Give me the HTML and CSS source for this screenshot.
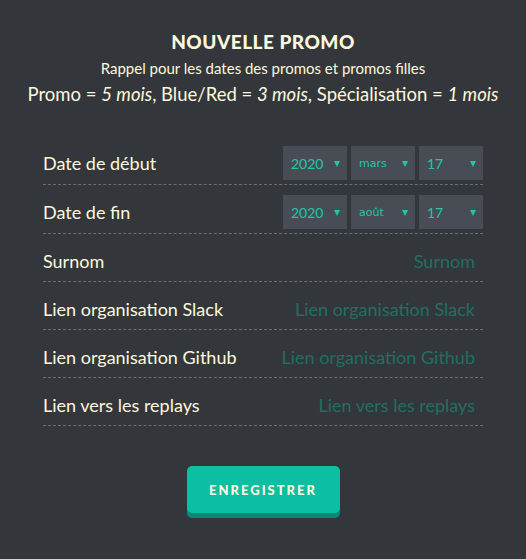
FILE: index.html
```html
<!DOCTYPE html>
<html lang="fr">
<head>
<meta charset="utf-8">
<title>Nouvelle promo</title>
<link rel="stylesheet" href="styles.css">
</head>
<body>
<main class="page">
  <header class="head">
    <h1 class="title">NOUVELLE PROMO</h1>
    <p class="sub">Rappel pour les dates des promos et promos filles</p>
    <p class="durations">Promo = <em>5 mois</em>, Blue/Red = <em>3 mois</em>, Spécialisation = <em>1 mois</em></p>
  </header>
  <form class="form">
    <div class="row row-date">
      <span class="label">Date de début</span>
      <div class="selects">
        <div class="sel"><select class="num"><option>2020</option></select><svg class="arrow" viewBox="0 0 6 6"><path d="M0 0H6L3 6Z"/></svg></div>
        <div class="sel"><select class="month"><option>mars</option></select><svg class="arrow" viewBox="0 0 6 6"><path d="M0 0H6L3 6Z"/></svg></div>
        <div class="sel"><select class="num"><option>17</option></select><svg class="arrow" viewBox="0 0 6 6"><path d="M0 0H6L3 6Z"/></svg></div>
      </div>
    </div>
    <div class="row row-date">
      <span class="label">Date de fin</span>
      <div class="selects">
        <div class="sel"><select class="num"><option>2020</option></select><svg class="arrow" viewBox="0 0 6 6"><path d="M0 0H6L3 6Z"/></svg></div>
        <div class="sel"><select class="month"><option>août</option></select><svg class="arrow" viewBox="0 0 6 6"><path d="M0 0H6L3 6Z"/></svg></div>
        <div class="sel"><select class="num"><option>17</option></select><svg class="arrow" viewBox="0 0 6 6"><path d="M0 0H6L3 6Z"/></svg></div>
      </div>
    </div>
    <div class="row">
      <label class="label" for="f-surnom">Surnom</label>
      <input class="field" id="f-surnom" type="text" placeholder="Surnom">
    </div>
    <div class="row">
      <label class="label" for="f-slack">Lien organisation Slack</label>
      <input class="field" id="f-slack" type="text" placeholder="Lien organisation Slack">
    </div>
    <div class="row">
      <label class="label" for="f-github">Lien organisation Github</label>
      <input class="field" id="f-github" type="text" placeholder="Lien organisation Github">
    </div>
    <div class="row">
      <label class="label" for="f-replays">Lien vers les replays</label>
      <input class="field" id="f-replays" type="text" placeholder="Lien vers les replays">
    </div>
    <div class="actions">
      <button class="btn" type="button">ENREGISTRER</button>
    </div>
  </form>
</main>
</body>
</html>
```

FILE: styles.css
```css
* { box-sizing: border-box; }
html, body {
  margin: 0;
  padding: 0;
  background: #33373b;
  height: 100%;
}
body {
  font-family: Lato, "Open Sans", sans-serif;
  color: #fdf8dc;
}
.page {
  width: 440px;
  margin: 0 auto;
  padding-top: 31px;
}
.head {
  text-align: center;
}
.title {
  margin: 0;
  font-size: 19px;
  font-weight: 900;
  letter-spacing: 0.5px;
  line-height: 22px;
}
.sub {
  margin: 6px 0 0;
  font-size: 15px;
  line-height: 18px;
}
.durations {
  margin: 6px -40px 0;
  font-size: 18.5px;
  line-height: 22px;
}
.durations em {
  font-style: italic;
}
.form {
  margin-top: 31px;
}
.row {
  display: flex;
  align-items: center;
  justify-content: space-between;
  height: 48px;
  padding: 10px 0 4px;
  border-bottom: 1px dashed #6a6d70;
}
.row-date {
  height: 49px;
}
.label {
  font-size: 18px;
  color: #fdf8dc;
  white-space: nowrap;
}
.selects {
  display: flex;
  gap: 4px;
  height: 34px;
}
.sel {
  position: relative;
  width: 64px;
  height: 34px;
  background: #484d55;
}
.sel select {
  appearance: none;
  -webkit-appearance: none;
  width: 100%;
  height: 100%;
  border: 0;
  background: transparent;
  color: #1fc7a5;
  padding: 0 8px;
  font-family: Lato, "Open Sans", sans-serif;
  outline: none;
}
.sel select.num { font-size: 14px; }
.sel select.month { font-size: 11px; font-family: "DejaVu Sans", sans-serif; }
.arrow {
  position: absolute;
  right: 7px;
  top: 15px;
  width: 6px;
  height: 6px;
  fill: #1fc7a5;
  pointer-events: none;
}
.field {
  flex: 1;
  min-width: 0;
  margin-left: 20px;
  height: 34px;
  background: transparent;
  border: 0;
  outline: none;
  text-align: right;
  padding: 0 8px;
  font-family: Lato, "Open Sans", sans-serif;
  font-size: 18px;
  color: #1fc7a5;
}
.field::placeholder {
  color: #216e63;
  opacity: 1;
}
.actions {
  display: flex;
  justify-content: center;
  padding-top: 40px;
}
.btn {
  width: 153px;
  height: 47px;
  border: 0;
  border-radius: 5px;
  background: #0cbfa3;
  box-shadow: 0 5px 0 #0a8a76;
  color: #fdf8dc;
  font-family: Lato, "Open Sans", sans-serif;
  font-weight: 900;
  font-size: 13px;
  letter-spacing: 2px;
  cursor: pointer;
}
```
